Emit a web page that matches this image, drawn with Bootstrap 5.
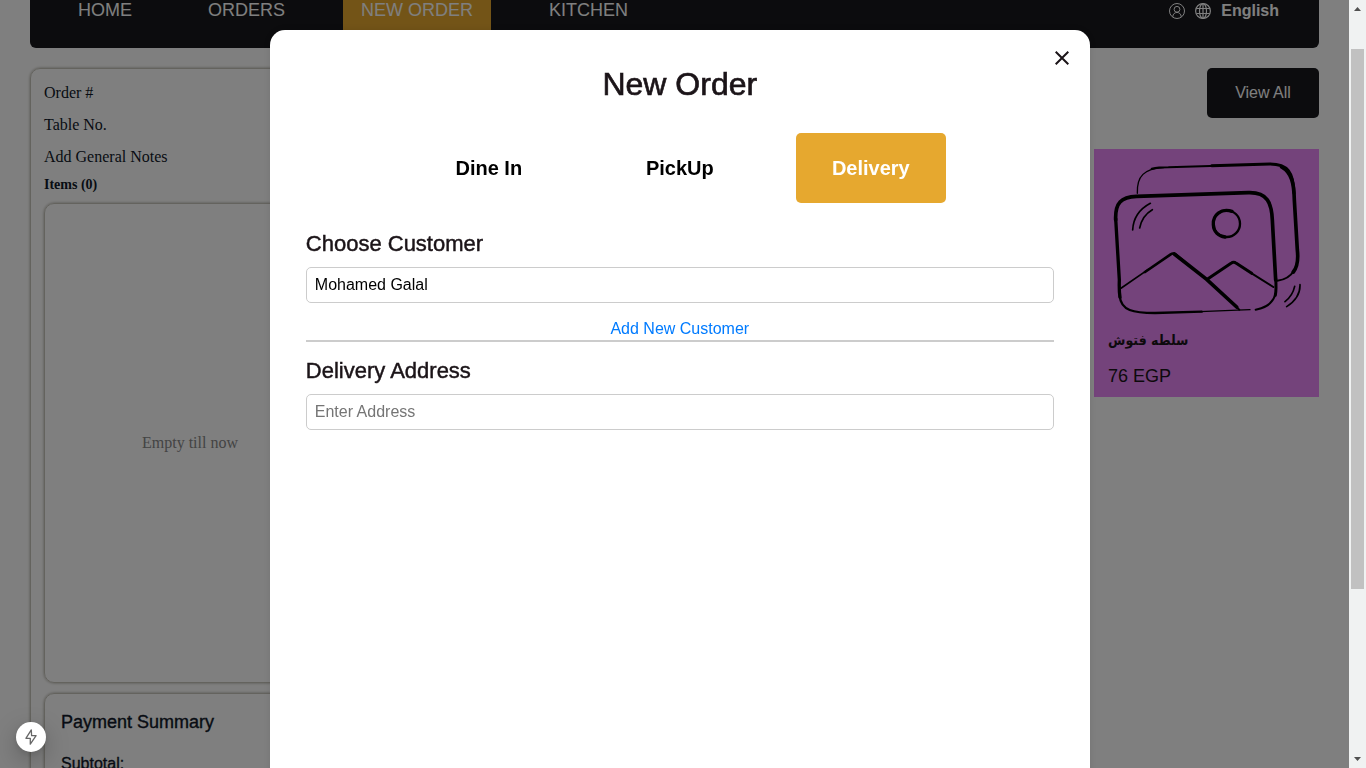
<!DOCTYPE html>
<html lang="en">
<head>
<meta charset="utf-8">
<meta name="viewport" content="width=device-width, initial-scale=1">
<title>New Order</title>
<link href="https://cdn.jsdelivr.net/npm/bootstrap@5.3.0/dist/css/bootstrap.min.css" rel="stylesheet">
<style>
  :root { --ink: #18181c; --gold: #e6a82f; --scroll-w: 17px; }
  body { font-family: "Liberation Sans", "DejaVu Sans", sans-serif; font-size: 16px; line-height: 24px; color: #1b1418; background: #fff; }
  .app-view { height: 100vh; overflow: hidden; }
  .page-area { padding: 0 30px; overflow: hidden; min-width: 0; }

  .top-nav { background: var(--ink); border-radius: 0 0 6px 6px; height: 48px; padding: 0 40px 0 30px; }
  .top-nav .nav { gap: 40px; }
  .top-nav .nav-link { color: #fff; font-size: 18px; line-height: 20px; padding: 0 18px 10px; }
  .top-nav .nav-link.active { background: var(--gold); }
  .user-tools { gap: 10px; color: #fff; line-height: 22px; }
  .user-tools a { color: #fff; }

  .order-panel { width: 320px; border: 1px solid #c9c7bd; border-radius: 10px; padding: 12px 13px; box-shadow: 0 0 3px #a5a398; margin-top: 20px; font-family: "Liberation Serif", serif; color: #101828; }
  .inner-box { border: 1px solid #c9c7bd; border-radius: 10px; box-shadow: 0 0 3px #a5a398; }
  .items-box { height: 480px; color: #888; }
  .items-title { font-size: 14px; line-height: 24px; margin-bottom: 6px; }
  .pay-box { font-family: "Liberation Sans", sans-serif; padding: 16px; height: 220px; margin-top: 10px; }
  .pay-box h2 { font-size: 18px; line-height: 24px; font-weight: 400; margin-bottom: 18px; -webkit-text-stroke: thin; }
  .pay-box p { -webkit-text-stroke: thin; }

  .btn-all { --bs-btn-color: #fff; --bs-btn-bg: var(--ink); --bs-btn-border-radius: 5px; width: 112px; height: 50px; border: 0; }
  .dish { width: 225px; background: #e886f6; margin-top: 31px; }
  .dish-text { padding: 2px 14px 8px; }
  .dish-name { font-family: "DejaVu Sans Condensed", "DejaVu Sans", sans-serif; font-size: 14px; line-height: 26px; font-weight: 700; margin-bottom: 10px; }
  .dish-price { font-size: 18px; line-height: 26px; }

  .order-modal { width: calc(100% - var(--scroll-w)); background: rgba(0,0,0,.5); overflow: hidden; }
  .order-modal .modal-dialog { max-width: none; width: 820px; margin: 30px 0 0 20%; }
  .order-modal .modal-content { border: 0; border-radius: 15px; min-height: 100vh; padding: 34px 36px; box-shadow: 0 0 8px rgba(0,0,0,.1); color: inherit; }
  .modal-heading { font-size: 32px; line-height: 40px; font-weight: 400; margin-bottom: 29px; -webkit-text-stroke: thin; }
  .close-x { top: 14px; right: 14px; width: 28px; height: 28px; color: #1b1418; }
  .kinds { gap: 41px; margin-bottom: 26px; }
  .kind-btn { width: 150px; height: 70px; border: 0; border-radius: 5px; font-size: 20px; font-weight: 700; --bs-btn-color: #000; --bs-btn-active-bg: var(--gold); --bs-btn-active-color: #fff; }
  .field-title { font-size: 22px; line-height: 30px; -webkit-text-stroke: thin; margin-bottom: 8px; }
  .field-box { height: 36px; padding: 5px 8px; border-color: #ccc; border-radius: 5px; color: #000; }
  .field-box::placeholder { color: #757575; }
  .add-link { color: #007bff; }
  .rule { border-bottom: 2px solid #ccc; margin-top: 14px; margin-bottom: 14px; line-height: 23px; }

  .flash { left: 16px; bottom: 16px; width: 30px; height: 30px; background: #fff; z-index: 1100; border: 0; color: #666; box-shadow: 0 8px 24px rgba(0,0,0,.25), 0 2px 6px rgba(0,0,0,.1); }
  .scroll-track { width: var(--scroll-w); background: #f0f2f2; padding: 7px 2px; }
  .scroll-thumb { background: #c1c1c1; height: 72%; margin-top: 38px; margin-bottom: 168px; }
</style>
</head>
<body>
<div class="app-view d-flex">
  <div class="page-area flex-grow-1">
    <header class="top-nav d-flex justify-content-between align-items-start">
      <nav class="nav flex-nowrap" aria-label="Main">
        <a class="nav-link" href="#">HOME</a>
        <a class="nav-link" href="#">ORDERS</a>
        <a class="nav-link active" href="#">NEW ORDER</a>
        <a class="nav-link" href="#">KITCHEN</a>
      </nav>
      <div class="user-tools d-flex align-items-center">
        <a href="#" class="d-flex" aria-label="Account"><svg width="16" height="22" viewBox="0 -3 16 22" fill="none" stroke="currentColor"><circle cx="8" cy="8" r="7.5"/><circle cx="8" cy="6.3" r="2.9"/><path d="M3.8 13.8c0-5.8 8.4-5.8 8.4 0"/></svg></a>
        <svg width="16" height="22" viewBox="0 -3 16 22" fill="none" stroke="#fff" stroke-width="1.2" aria-hidden="true"><circle cx="8" cy="8" r="7.4"/><ellipse cx="8" cy="8" rx="3.5" ry="7.4"/><path d="M8 .5v15M1.3 5.500h13.4M1.3 10.500h13.4"/></svg>
        <a href="#" class="fw-bold text-decoration-none">English</a>
      </div>
    </header>

    <div class="d-flex justify-content-between align-items-start">
      <section class="order-panel">
        <p class="mb-0">Order #</p>
        <p class="mb-2 pt-2">Table No.</p>
        <p class="mb-1">Add General Notes</p>
        <p class="items-title fw-bold">Items (0)</p>
        <div class="inner-box items-box d-flex align-items-center justify-content-center">Empty till now</div>
        <div class="inner-box pay-box">
          <h2>Payment Summary</h2>
          <p>Subtotal:</p>
        </div>
      </section>
      <section class="d-flex flex-column align-items-end pt-1 mt-3">
        <button type="button" class="btn btn-all">View All</button>
        <article class="dish">
          <svg class="d-block w-100" viewBox="27 27 675 528" fill="none" stroke="#000" stroke-linecap="round" aria-hidden="true">
            <path d="M157 160C155 108 178 86 235 83" stroke-width="4"/>
            <path d="M200 86C215 83 225 82 250 82L400 77" stroke-width="6"/>
            <path d="M380 77L555 72C608 72 625 96 627 160" stroke-width="9"/>
            <path d="M590 81C620 98 627 130 628 180L637 330C641 365 636 382 625 396" stroke-width="11"/>
            <path d="M628 391C615 412 600 420 577 422" stroke-width="6"/>
            <path d="M92 240C90 188 108 171 155 169L490 158C548 156 560 190 562 240L572 420" stroke-width="11"/>
            <path d="M92 235L103 420C102 450 103 460 105 472" stroke-width="10"/>
            <path d="M104 468C108 512 145 519 210 519L350 515" stroke-width="7"/>
            <path d="M345 515L495 509" stroke-width="4"/>
            <path d="M572 415C574 440 574 450 571 466" stroke-width="9"/>
            <path d="M572 460C564 492 542 504 512 509" stroke-width="6"/>
            <circle cx="425" cy="251" r="40" stroke-width="7"/>
            <path d="M441 214C408 203 383 226 385 254C386 276 401 289 420 291" stroke-width="10"/>
            <path d="M109 444L190 388" stroke-width="5"/>
            <path d="M180 396L257 343Q264 338 271 343L300 367" stroke-width="8"/>
            <path d="M268 342L365 418L455 501" stroke-width="11"/>
            <path d="M455 502L463 509" stroke-width="6"/>
            <path d="M369 416L438 370Q446 364 454 370L500 400" stroke-width="9"/>
            <path d="M500 400L565 441" stroke-width="6"/>
            <path d="M143 270C145 230 168 205 196 190M164 264C169 239 181 221 202 209M600 485C614 474 624 462 629 439M605 500C630 484 646 462 645 434" stroke-width="5"/>
          </svg>
          <div class="dish-text">
            <div class="dish-name" lang="ar"><bdi>سلطه فتوش</bdi></div>
            <div class="dish-price">76 EGP</div>
          </div>
        </article>
      </section>
    </div>
  </div>
  <div class="scroll-track d-flex flex-column align-items-center" aria-hidden="true">
    <svg width="7" height="4" viewBox="0 0 7 4" class="flex-shrink-0"><path d="M0 4L3.500 0L7 4z" fill="#505050"/></svg>
    <div class="scroll-thumb w-100"></div>
    <svg width="7" height="4" viewBox="0 0 7 4" class="mt-auto flex-shrink-0"><path d="M0 0L3.500 4L7 0z" fill="#505050"/></svg>
  </div>
</div>

<div class="modal d-block order-modal" role="dialog" aria-modal="true" aria-labelledby="orderTitle">
  <div class="modal-dialog">
    <form class="modal-content">
      <button type="button" class="btn close-x position-absolute p-0 border-0 d-flex align-items-center justify-content-center" aria-label="Close"><svg width="14" height="14" viewBox="0 0 14 14" stroke="currentColor" stroke-width="2"><path d="M.7.7l12.600 12.600M13.300.7L.7 13.300"/></svg></button>
      <h1 class="modal-heading text-center" id="orderTitle">New Order</h1>
      <div class="kinds d-flex justify-content-center">
        <button type="button" class="btn kind-btn">Dine In</button>
        <button type="button" class="btn kind-btn">PickUp</button>
        <button type="button" class="btn kind-btn active">Delivery</button>
      </div>
      <label class="field-title" for="customer">Choose Customer</label>
      <input class="form-control field-box" id="customer" type="text" value="Mohamed Galal">
      <div class="rule text-center"><a href="#" class="add-link text-decoration-none">Add New Customer</a></div>
      <label class="field-title" for="address">Delivery Address</label>
      <input class="form-control field-box" id="address" type="text" placeholder="Enter Address">
    </form>
  </div>
</div>

<button type="button" class="flash position-fixed rounded-circle d-flex align-items-center justify-content-center p-0" aria-label="Developer tools"><svg width="12" height="16" viewBox="0 0 12 16" fill="none" stroke="currentColor" stroke-width="1.3" stroke-linejoin="round"><path d="M6.300.8L.9 9.300h4.400v5.900l5.800-8.500H6.600z"/></svg></button>
<script src="https://cdn.jsdelivr.net/npm/bootstrap@5.3.0/dist/js/bootstrap.bundle.min.js"></script>
</body>
</html>
